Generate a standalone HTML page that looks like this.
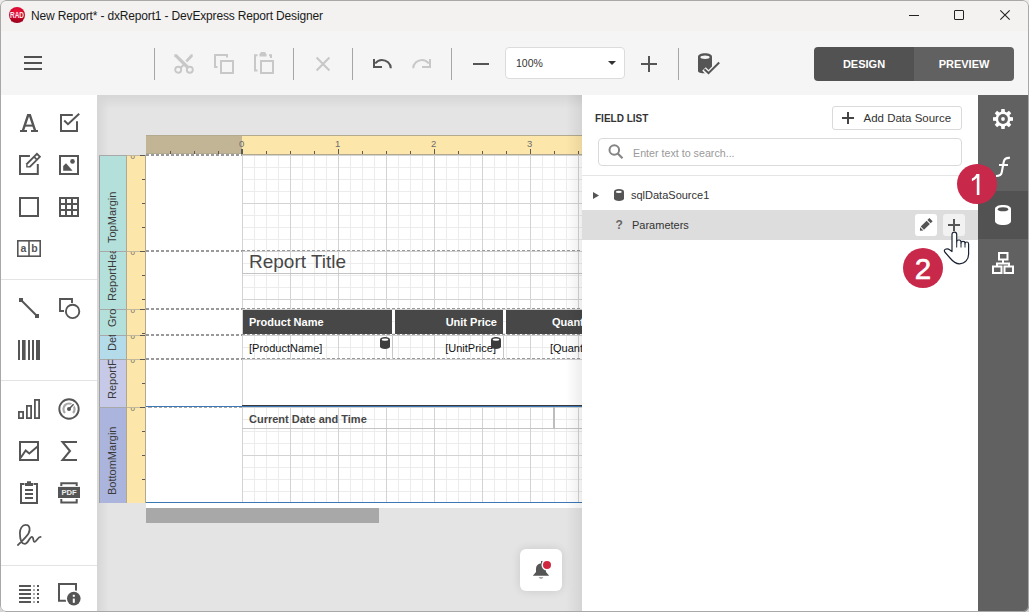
<!DOCTYPE html>
<html><head><meta charset="utf-8">
<style>
*{box-sizing:border-box}
html,body{margin:0;padding:0;width:1029px;height:612px;overflow:hidden;background:linear-gradient(#ecebea,#d6d4d3);font-family:"Liberation Sans",sans-serif}
.a{position:absolute}
.t{position:absolute;white-space:nowrap;line-height:1}
svg{position:absolute;overflow:visible}
</style></head><body>
<div id="root" class="a" style="left:0;top:0;width:1029px;height:612px;overflow:hidden;border-radius:6px">

<!-- title bar -->
<div class="a" style="left:0;top:0;width:1029px;height:31px;background:#f3f2f1"></div>
<!-- RAD logo -->
<svg style="left:9px;top:7px" width="16" height="16" viewBox="0 0 16 16"><defs><radialGradient id="rg" cx="50%" cy="35%" r="65%"><stop offset="0" stop-color="#f01840"/><stop offset="0.7" stop-color="#d0062a"/><stop offset="1" stop-color="#90001a"/></radialGradient></defs><circle cx="8" cy="8" r="8" fill="url(#rg)"/><rect x="2" y="11.5" width="12" height="3" fill="#a0001c" opacity="0.6"/><text x="8" y="11.3" text-anchor="middle" textLength="14" lengthAdjust="spacingAndGlyphs" style="font-family:'Liberation Sans';font-weight:bold" font-size="8.2" fill="#f4e8ec">RAD</text></svg>
<div class="t" style="left:31px;top:10px;font-size:12px;color:#1a1a1a;letter-spacing:-0.16px">New Report* - dxReport1 - DevExpress Report Designer</div>
<!-- window controls -->
<div class="a" style="left:909px;top:15px;width:10px;height:1px;background:#222"></div>
<div class="a" style="left:954px;top:10px;width:10px;height:10px;border:1px solid #222;border-radius:1px"></div>
<svg style="left:1000px;top:10px" width="10" height="10"><path d="M0.3 0.3L9.7 9.7M9.7 0.3L0.3 9.7" stroke="#222" stroke-width="1.1"/></svg>

<!-- toolbar -->
<div class="a" style="left:0;top:31px;width:1029px;height:64px;background:#f5f5f5"></div>
<!-- hamburger -->
<div class="a" style="left:24px;top:56px;width:18px;height:2px;background:#505050"></div>
<div class="a" style="left:24px;top:62px;width:18px;height:2px;background:#505050"></div>
<div class="a" style="left:24px;top:68px;width:18px;height:2px;background:#505050"></div>
<!-- separators -->
<div class="a" style="left:154px;top:48px;width:1px;height:32px;background:#a6a6a6"></div>
<div class="a" style="left:293px;top:48px;width:1px;height:32px;background:#a6a6a6"></div>
<div class="a" style="left:352px;top:48px;width:1px;height:32px;background:#a6a6a6"></div>
<div class="a" style="left:451px;top:48px;width:1px;height:32px;background:#a6a6a6"></div>
<div class="a" style="left:678px;top:48px;width:1px;height:32px;background:#a6a6a6"></div>
<!-- cut -->
<svg style="left:174px;top:54px" width="20" height="20" viewBox="0 0 20 20"><g fill="#c8c8c8"><path d="M0.3 0.3H2.8L15.5 12.8L13.2 15.2L0.3 2.2Z"/><path d="M18.7 0.3V2.8L13.3 8.2L11.4 6.4L17 0.3Z"/><path d="M10.6 8.6L12.1 10L7 14.8L5.5 13.5Z"/></g><g fill="none" stroke="#c8c8c8" stroke-width="1.9"><circle cx="4.2" cy="15.8" r="3"/><circle cx="15.8" cy="15.8" r="3"/></g></svg>
<!-- copy -->
<svg style="left:214px;top:54px" width="21" height="21" viewBox="0 0 21 21"><g fill="none" stroke="#c8c8c8" stroke-width="2"><path d="M3.5 13H1V1H13V3.5"/><rect x="7" y="7" width="12" height="12"/></g></svg>
<!-- paste -->
<svg style="left:254px;top:52px" width="21" height="23" viewBox="0 0 21 23"><g fill="none" stroke="#c8c8c8" stroke-width="2"><path d="M3.5 3.3H1V18.5H3.5"/><path d="M15 3.3H17V6"/><rect x="7" y="9" width="12" height="12"/></g><path d="M5.5 2.3L7 0H11L12.5 2.3V4.6H5.5Z" fill="#c8c8c8"/></svg>
<!-- delete -->
<svg style="left:316px;top:57px" width="14" height="14" viewBox="0 0 14 14"><path d="M0.6 0.6L13.4 13.4M13.4 0.6L0.6 13.4" stroke="#c8c8c8" stroke-width="2.1"/></svg>
<!-- undo -->
<svg style="left:372px;top:59px" width="20" height="10" viewBox="0 0 20 10"><path d="M18.8 9.3C18.8 4.5 14.5 1 9.8 1C7 1 5 2.2 3.2 4.5" fill="none" stroke="#555" stroke-width="2"/><path d="M1 0H3V7H10V9H1Z" fill="#555"/></svg>
<!-- redo -->
<svg style="left:412px;top:59px" width="20" height="10" viewBox="0 0 20 10"><path d="M1.2 9.3C1.2 4.5 5.5 1 10.2 1C13 1 15 2.2 16.8 4.5" fill="none" stroke="#c8c8c8" stroke-width="2"/><path d="M19 0H17V7H10V9H19Z" fill="#c8c8c8"/></svg>
<!-- minus -->
<div class="a" style="left:473px;top:63px;width:16px;height:2px;background:#555"></div>
<!-- zoom combo -->
<div class="a" style="left:505px;top:47px;width:120px;height:32px;background:#fff;border:1px solid #dcdcdc;border-radius:4px"></div>
<div class="t" style="left:516px;top:58px;font-size:10.5px;color:#333">100%</div>
<svg style="left:608px;top:61px" width="8" height="4"><path d="M0 0H8L4 4Z" fill="#333"/></svg>
<!-- plus -->
<div class="a" style="left:641px;top:63px;width:16px;height:2px;background:#555"></div>
<div class="a" style="left:648px;top:56px;width:2px;height:16px;background:#555"></div>
<!-- validate -->
<svg style="left:697px;top:53px" width="24" height="23" viewBox="0 0 24 23"><path d="M1 4C1 1.5 4 0.3 8 0.3C12 0.3 15 1.5 15 4V18C15 19.5 12 20.3 8 20.3C4 20.3 1 19.5 1 18Z" fill="#555"/><ellipse cx="8" cy="4.3" rx="4.6" ry="1.7" fill="#f5f5f5"/><path d="M7 16L11.5 20.5L22.5 9.5" fill="none" stroke="#f5f5f5" stroke-width="5"/><path d="M7.5 16.2L11.5 20.2L22.2 9.5" fill="none" stroke="#555" stroke-width="2"/></svg>
<!-- design/preview -->
<div class="a" style="left:814px;top:47px;width:100px;height:34px;background:#525252;border-radius:4px 0 0 4px"></div>
<div class="a" style="left:914px;top:47px;width:100px;height:34px;background:#616161;border-radius:0 4px 4px 0"></div>
<div class="t" style="left:814px;top:59px;width:100px;text-align:center;font-size:11px;font-weight:bold;color:#fff">DESIGN</div>
<div class="t" style="left:914px;top:59px;width:100px;text-align:center;font-size:11px;font-weight:bold;color:#fff">PREVIEW</div>
<!-- left toolbox -->
<div class="a" style="left:0;top:95px;width:97px;height:517px;background:#fff"></div>
<div class="a" style="left:1px;top:279px;width:96px;height:1px;background:#e3e3e3"></div>
<div class="a" style="left:1px;top:380px;width:96px;height:1px;background:#e3e3e3"></div>
<div class="a" style="left:1px;top:565px;width:96px;height:1px;background:#e3e3e3"></div>
<!-- A -->
<svg style="left:20px;top:114px" width="18" height="18" viewBox="0 0 18 18"><g fill="#555"><path d="M7.2 0H10.8L16.3 16.5H13.8L9 2.6L4.2 16.5H1.7Z"/><rect x="5" y="10.6" width="8" height="2"/><rect x="0" y="16" width="7" height="2"/><rect x="11" y="16" width="7" height="2"/></g></svg>
<!-- checkbox -->
<svg style="left:60px;top:113px" width="20" height="19" viewBox="0 0 20 19"><g fill="none" stroke="#555" stroke-width="2"><path d="M12.8 2H1V18H17V8.2"/><path d="M4.2 7.5L8 11.2L19.2 0.8"/></g></svg>
<!-- edit (richtext) -->
<svg style="left:19px;top:153px" width="23" height="23" viewBox="0 0 23 23"><path d="M10.9 3H1V21H18.8V11" fill="none" stroke="#555" stroke-width="2"/><g transform="translate(7.2 14.6) rotate(-45)"><path d="M0 0L3 -3H18.2V3H3Z" fill="#555"/><path d="M1.9 0L3.3 -1.2H12.3V1.2H3.3Z" fill="#fff"/><rect x="14" y="-1.2" width="2.4" height="2.4" fill="#fff"/></g></svg>
<!-- picture -->
<svg style="left:59px;top:155px" width="20" height="20" viewBox="0 0 20 20"><rect x="1" y="1" width="18" height="18" fill="none" stroke="#555" stroke-width="2"/><circle cx="13.5" cy="6.4" r="2.3" fill="#555"/><path d="M4.2 15.8V11L7 8.3L13.6 15.8Z" fill="#555"/></svg>
<!-- rect -->
<svg style="left:19px;top:197px" width="20" height="20" viewBox="0 0 20 20"><rect x="1" y="1" width="18" height="18" fill="none" stroke="#555" stroke-width="2"/></svg>
<!-- table -->
<svg style="left:59px;top:197px" width="20" height="20" viewBox="0 0 20 20"><g fill="none" stroke="#555" stroke-width="2"><rect x="1" y="1" width="18" height="18"/><path d="M7 1V19M13 1V19M1 7H19M1 13H19"/></g></svg>
<!-- ab -->
<svg style="left:17px;top:240px" width="24" height="17" viewBox="0 0 24 17"><g fill="none" stroke="#555" stroke-width="1.6"><rect x="0.8" y="0.8" width="22.4" height="15.4"/><path d="M12 0.8V16.2"/></g><text x="6.4" y="11.8" style="font-family:'Liberation Sans';font-weight:bold" font-size="10.5" fill="#555" text-anchor="middle">a</text><text x="17.4" y="11.8" style="font-family:'Liberation Sans';font-weight:bold" font-size="10.5" fill="#555" text-anchor="middle">b</text></svg>
<!-- line -->
<svg style="left:19px;top:298px" width="20" height="20" viewBox="0 0 20 20"><path d="M2 2L18 18" stroke="#555" stroke-width="1.9"/><rect x="0" y="0" width="4" height="4" fill="#555"/><rect x="16" y="16" width="4" height="4" fill="#555"/></svg>
<!-- shapes -->
<svg style="left:59px;top:298px" width="22" height="22" viewBox="0 0 22 22"><g fill="none" stroke="#555" stroke-width="1.9"><path d="M5 13H1V1H13V5"/><circle cx="13.6" cy="13.4" r="6.7"/></g></svg>
<!-- barcode -->
<svg style="left:18px;top:340px" width="22" height="20" viewBox="0 0 22 20"><g fill="#555"><rect x="0" y="0" width="2" height="20"/><rect x="4" y="0" width="3.6" height="20"/><rect x="10" y="0" width="2" height="20"/><rect x="14" y="0" width="2" height="20"/><rect x="18" y="0" width="4" height="20"/></g></svg>
<!-- chart -->
<svg style="left:18px;top:399px" width="22" height="20" viewBox="0 0 22 20"><g fill="none" stroke="#555" stroke-width="1.8"><rect x="0.9" y="12.9" width="4.2" height="6.2"/><rect x="8.9" y="6.9" width="4.2" height="12.2"/><rect x="16.9" y="0.9" width="4.2" height="18.2"/></g></svg>
<!-- gauge -->
<svg style="left:58px;top:398px" width="22" height="22" viewBox="0 0 22 22"><circle cx="11" cy="11" r="9.7" fill="none" stroke="#555" stroke-width="1.9"/><path d="M7 15A5.6 5.6 0 1 1 15 15" fill="none" stroke="#aaa" stroke-width="2.2"/><path d="M11 11L15.8 6" stroke="#fff" stroke-width="3.4"/><path d="M11 11L15.6 6.2" stroke="#555" stroke-width="1.5"/><circle cx="11" cy="11" r="2" fill="#555"/></svg>
<!-- sparkline -->
<svg style="left:19px;top:441px" width="20" height="20" viewBox="0 0 20 20"><g fill="none" stroke="#555" stroke-width="2"><rect x="1" y="1" width="18" height="18"/><path d="M1.5 17L6.7 9.5L10.3 12.5L18.8 5.3"/></g></svg>
<!-- sigma -->
<svg style="left:61px;top:441px" width="17" height="20" viewBox="0 0 17 20"><path d="M16 1H1.5L9 10L1.5 19H16" fill="none" stroke="#555" stroke-width="2"/></svg>
<!-- clipboard -->
<svg style="left:20px;top:481px" width="18" height="23" viewBox="0 0 18 23"><g fill="none" stroke="#555" stroke-width="2"><path d="M4.5 3H1V22H17V3H13.5"/></g><path d="M5 2H7V0.2H11V2H13V5H5Z" fill="#555"/><g fill="#555"><rect x="5" y="8" width="8" height="2"/><rect x="5" y="12" width="8" height="2"/><rect x="5" y="16" width="8" height="2"/></g></svg>
<!-- pdf -->
<svg style="left:58px;top:482px" width="22" height="22" viewBox="0 0 22 22"><g fill="none" stroke="#555" stroke-width="2"><path d="M3.3 3.9V1.3H18.7V3.9M3.3 17V20.5H18.7V17"/></g><rect x="0" y="4.9" width="22" height="11.1" fill="#555"/><text x="11" y="13.1" style="font-family:'Liberation Sans';font-weight:bold" font-size="7.6" fill="#eee" text-anchor="middle">PDF</text></svg>
<!-- signature -->
<svg style="left:17px;top:524px" width="25" height="23" viewBox="0 0 25 23"><path d="M0.9 21C3 19 9 13.5 11.5 9.5C13.5 6 13 1 9 0.9C5 0.7 2.9 5 2.9 9C2.9 14 4 19.9 7.8 19.9C11 19.9 12.5 12.9 14.8 12.9C17 12.9 15.8 17.9 17.3 17.9C19.2 17.9 21 12.9 23.6 12.9" fill="none" stroke="#555" stroke-width="1.8" stroke-linecap="round"/></svg>
<!-- toc -->
<svg style="left:19px;top:585px" width="20" height="18" viewBox="0 0 20 18"><g fill="#555"><rect x="0" y="0" width="12" height="2"/><rect x="0" y="4" width="12" height="2"/><rect x="0" y="8" width="12" height="2"/><rect x="0" y="12" width="12" height="2"/><rect x="0" y="16" width="12" height="2"/><rect x="18" y="0" width="2" height="2"/><rect x="18" y="4" width="2" height="2"/><rect x="18" y="8" width="2" height="2"/><rect x="18" y="12" width="2" height="2"/><rect x="18" y="16" width="2" height="2"/></g><g fill="#aaa"><rect x="14" y="0" width="2" height="2"/><rect x="14" y="4" width="2" height="2"/><rect x="14" y="8" width="2" height="2"/><rect x="14" y="12" width="2" height="2"/><rect x="14" y="16" width="2" height="2"/></g></svg>
<!-- page info -->
<svg style="left:58px;top:583px" width="23" height="23" viewBox="0 0 23 23"><path d="M8 17.8H1V1H18V8" fill="none" stroke="#555" stroke-width="2"/><circle cx="15.8" cy="15.6" r="8.3" fill="#fff"/><circle cx="15.8" cy="15.6" r="6.8" fill="#555"/><rect x="14.8" y="15.6" width="2" height="4.2" fill="#fff"/><rect x="14.8" y="11.8" width="2" height="2" fill="#fff"/></svg>
<div class="a" style="left:97px;top:95px;width:485px;height:517px;background:#e4e4e4;overflow:hidden">
<div class="a" style="left:0;top:0;width:485px;height:14px;background:linear-gradient(#d6d6d6,rgba(228,228,228,0))"></div>
<div class="a" style="left:0;top:0;width:12px;height:517px;background:linear-gradient(to right,#d6d6d6,rgba(228,228,228,0))"></div>
</div>
<div class="a" style="left:97px;top:95px;width:485px;height:517px;overflow:hidden">
<div class="a" style="left:49px;top:40px;width:96px;height:20px;background:#c1b595"></div>
<div class="a" style="left:145px;top:40px;width:400px;height:20px;background:#fde6a9"></div>
<div class="a" style="left:49px;top:40px;width:500px;height:1px;background:#b3a98f"></div>
<div class="a" style="left:49px;top:58px;width:96px;height:1px;background:#b3a98f"></div>
<div class="a" style="left:49px;top:59px;width:96px;height:1px;background:#fff"></div>
<div class="a" style="left:145px;top:59px;width:400px;height:1px;background:#b3a98f"></div>
<div class="a" style="left:73px;top:56px;width:1px;height:3px;background:#5a5a5a"></div>
<div class="a" style="left:97px;top:56px;width:1px;height:3px;background:#5a5a5a"></div>
<div class="a" style="left:121px;top:56px;width:1px;height:3px;background:#5a5a5a"></div>
<div class="a" style="left:144px;top:54px;width:2px;height:5px;background:#5a5a5a"></div>
<div class="a" style="left:169px;top:56px;width:1px;height:3px;background:#5a5a5a"></div>
<div class="a" style="left:193px;top:56px;width:1px;height:3px;background:#5a5a5a"></div>
<div class="a" style="left:217px;top:56px;width:1px;height:3px;background:#5a5a5a"></div>
<div class="a" style="left:241px;top:54px;width:1px;height:5px;background:#5a5a5a"></div>
<div class="a" style="left:265px;top:56px;width:1px;height:3px;background:#5a5a5a"></div>
<div class="a" style="left:289px;top:56px;width:1px;height:3px;background:#5a5a5a"></div>
<div class="a" style="left:313px;top:56px;width:1px;height:3px;background:#5a5a5a"></div>
<div class="a" style="left:337px;top:54px;width:1px;height:5px;background:#5a5a5a"></div>
<div class="a" style="left:361px;top:56px;width:1px;height:3px;background:#5a5a5a"></div>
<div class="a" style="left:385px;top:56px;width:1px;height:3px;background:#5a5a5a"></div>
<div class="a" style="left:409px;top:56px;width:1px;height:3px;background:#5a5a5a"></div>
<div class="a" style="left:433px;top:54px;width:1px;height:5px;background:#5a5a5a"></div>
<div class="a" style="left:457px;top:56px;width:1px;height:3px;background:#5a5a5a"></div>
<div class="a" style="left:481px;top:56px;width:1px;height:3px;background:#5a5a5a"></div>
<div class="a" style="left:505px;top:56px;width:1px;height:3px;background:#5a5a5a"></div>
<div class="a" style="left:529px;top:54px;width:1px;height:5px;background:#5a5a5a"></div>
<div class="t" style="left:142px;top:43.5px;font-size:9.5px;color:#6e6e6e">0</div>
<div class="t" style="left:238px;top:43.5px;font-size:9.5px;color:#6e6e6e">1</div>
<div class="t" style="left:334px;top:43.5px;font-size:9.5px;color:#6e6e6e">2</div>
<div class="t" style="left:430px;top:43.5px;font-size:9.5px;color:#6e6e6e">3</div>
<div class="a" style="left:2px;top:60px;width:47px;height:348px;background:#b0a890"></div>
<div class="a" style="left:2px;top:60px;width:1px;height:348px;background:#a0a0a0"></div>
<div class="a" style="left:3px;top:60px;width:26px;height:96px;background:#b3e0db"></div>
<div class="a" style="left:30px;top:60px;width:18px;height:96px;background:#fde6a9"></div>
<div class="a" style="left:2px;top:60px;width:47px;height:1px;background:#a8a8a8"></div>
<div class="a" style="left:3px;top:60px;width:26px;height:96px;overflow:hidden"><div class="t" style="left:7px;top:88px;font-size:11px;color:#3a3a3a;transform-origin:0 0;transform:rotate(-90deg)">TopMargin</div></div>
<div class="a" style="left:45px;top:84px;width:4px;height:1px;background:#5a5a5a"></div>
<div class="a" style="left:45px;top:108px;width:4px;height:1px;background:#5a5a5a"></div>
<div class="a" style="left:45px;top:132px;width:4px;height:1px;background:#5a5a5a"></div>
<div class="a" style="left:30px;top:60px;width:18px;height:1px;background:#c4b89c"></div>
<div class="a" style="left:43px;top:60px;width:6px;height:1px;background:#5a5a5a"></div>
<div class="a" style="left:32px;top:61px;width:9px;height:6px;overflow:hidden"><div class="t" style="left:1.5px;top:-3.5px;font-size:8px;color:#6a6e70">0</div></div>
<div class="a" style="left:3px;top:156px;width:26px;height:58px;background:#b3e0db"></div>
<div class="a" style="left:30px;top:156px;width:18px;height:58px;background:#fde6a9"></div>
<div class="a" style="left:2px;top:156px;width:47px;height:1px;background:#a8a8a8"></div>
<div class="a" style="left:3px;top:156px;width:26px;height:58px;overflow:hidden"><div class="t" style="left:7px;top:50px;font-size:11px;color:#3a3a3a;transform-origin:0 0;transform:rotate(-90deg)">ReportHeader</div></div>
<div class="a" style="left:45px;top:180px;width:4px;height:1px;background:#5a5a5a"></div>
<div class="a" style="left:45px;top:204px;width:4px;height:1px;background:#5a5a5a"></div>
<div class="a" style="left:30px;top:156px;width:18px;height:1px;background:#c4b89c"></div>
<div class="a" style="left:43px;top:156px;width:6px;height:1px;background:#5a5a5a"></div>
<div class="a" style="left:32px;top:157px;width:9px;height:6px;overflow:hidden"><div class="t" style="left:1.5px;top:-3.5px;font-size:8px;color:#6a6e70">0</div></div>
<div class="a" style="left:3px;top:214px;width:26px;height:26px;background:#b3e0db"></div>
<div class="a" style="left:30px;top:214px;width:18px;height:26px;background:#fde6a9"></div>
<div class="a" style="left:2px;top:214px;width:47px;height:1px;background:#a8a8a8"></div>
<div class="a" style="left:3px;top:214px;width:26px;height:26px;overflow:hidden"><div class="t" style="left:7px;top:18px;font-size:11px;color:#3a3a3a;transform-origin:0 0;transform:rotate(-90deg)">GroupHeader</div></div>
<div class="a" style="left:45px;top:238px;width:4px;height:1px;background:#5a5a5a"></div>
<div class="a" style="left:30px;top:214px;width:18px;height:1px;background:#c4b89c"></div>
<div class="a" style="left:43px;top:214px;width:6px;height:1px;background:#5a5a5a"></div>
<div class="a" style="left:32px;top:215px;width:9px;height:6px;overflow:hidden"><div class="t" style="left:1.5px;top:-3.5px;font-size:8px;color:#6a6e70">0</div></div>
<div class="a" style="left:3px;top:240px;width:26px;height:24px;background:#b4dbea"></div>
<div class="a" style="left:30px;top:240px;width:18px;height:24px;background:#fde6a9"></div>
<div class="a" style="left:2px;top:240px;width:47px;height:1px;background:#a8a8a8"></div>
<div class="a" style="left:3px;top:240px;width:26px;height:24px;overflow:hidden"><div class="t" style="left:7px;top:16px;font-size:11px;color:#3a3a3a;transform-origin:0 0;transform:rotate(-90deg)">Detail</div></div>
<div class="a" style="left:30px;top:240px;width:18px;height:1px;background:#c4b89c"></div>
<div class="a" style="left:43px;top:240px;width:6px;height:1px;background:#5a5a5a"></div>
<div class="a" style="left:32px;top:241px;width:9px;height:6px;overflow:hidden"><div class="t" style="left:1.5px;top:-3.5px;font-size:8px;color:#6a6e70">0</div></div>
<div class="a" style="left:3px;top:264px;width:26px;height:48px;background:#c6cae8"></div>
<div class="a" style="left:30px;top:264px;width:18px;height:48px;background:#fde6a9"></div>
<div class="a" style="left:2px;top:264px;width:47px;height:1px;background:#a8a8a8"></div>
<div class="a" style="left:3px;top:264px;width:26px;height:48px;overflow:hidden"><div class="t" style="left:7px;top:40px;font-size:11px;color:#3a3a3a;transform-origin:0 0;transform:rotate(-90deg)">ReportFooter</div></div>
<div class="a" style="left:45px;top:288px;width:4px;height:1px;background:#5a5a5a"></div>
<div class="a" style="left:30px;top:264px;width:18px;height:1px;background:#c4b89c"></div>
<div class="a" style="left:43px;top:264px;width:6px;height:1px;background:#5a5a5a"></div>
<div class="a" style="left:32px;top:265px;width:9px;height:6px;overflow:hidden"><div class="t" style="left:1.5px;top:-3.5px;font-size:8px;color:#6a6e70">0</div></div>
<div class="a" style="left:3px;top:312px;width:26px;height:96px;background:#aab4dc"></div>
<div class="a" style="left:30px;top:312px;width:18px;height:96px;background:#fde6a9"></div>
<div class="a" style="left:2px;top:312px;width:47px;height:1px;background:#a8a8a8"></div>
<div class="a" style="left:3px;top:312px;width:26px;height:96px;overflow:hidden"><div class="t" style="left:7px;top:88px;font-size:11px;color:#3a3a3a;transform-origin:0 0;transform:rotate(-90deg)">BottomMargin</div></div>
<div class="a" style="left:45px;top:336px;width:4px;height:1px;background:#5a5a5a"></div>
<div class="a" style="left:45px;top:360px;width:4px;height:1px;background:#5a5a5a"></div>
<div class="a" style="left:45px;top:384px;width:4px;height:1px;background:#5a5a5a"></div>
<div class="a" style="left:30px;top:312px;width:18px;height:1px;background:#c4b89c"></div>
<div class="a" style="left:43px;top:312px;width:6px;height:1px;background:#5a5a5a"></div>
<div class="a" style="left:32px;top:313px;width:9px;height:6px;overflow:hidden"><div class="t" style="left:1.5px;top:-3.5px;font-size:8px;color:#6a6e70">0</div></div>
<div class="a" style="left:29px;top:60px;width:1px;height:348px;background:#b0a890"></div>
<div class="a" style="left:48px;top:60px;width:1px;height:348px;background:#b0a890"></div>
<div class="a" style="left:49px;top:60px;width:436px;height:353px;background:#fff"></div>
<div class="a" style="left:145px;top:60px;width:340px;height:96px;background:linear-gradient(to right,#d3d3d3 1px,transparent 1px) 0 0/48px 48px,linear-gradient(to bottom,#d3d3d3 1px,transparent 1px) 0 0/48px 48px,linear-gradient(to right,#ececec 1px,transparent 1px) 0 0/12px 12px,linear-gradient(to bottom,#ececec 1px,transparent 1px) 0 0/12px 12px,#fff"></div>
<div class="a" style="left:145px;top:156px;width:340px;height:58px;background:linear-gradient(to right,#d3d3d3 1px,transparent 1px) 0 0/48px 48px,linear-gradient(to bottom,#d3d3d3 1px,transparent 1px) 0 0/48px 48px,linear-gradient(to right,#ececec 1px,transparent 1px) 0 0/12px 12px,linear-gradient(to bottom,#ececec 1px,transparent 1px) 0 0/12px 12px,#fff"></div>
<div class="a" style="left:145px;top:214px;width:340px;height:26px;background:linear-gradient(to right,#d3d3d3 1px,transparent 1px) 0 0/48px 48px,linear-gradient(to bottom,#d3d3d3 1px,transparent 1px) 0 0/48px 48px,linear-gradient(to right,#ececec 1px,transparent 1px) 0 0/12px 12px,linear-gradient(to bottom,#ececec 1px,transparent 1px) 0 0/12px 12px,#fff"></div>
<div class="a" style="left:145px;top:240px;width:340px;height:24px;background:linear-gradient(to right,#d3d3d3 1px,transparent 1px) 0 0/48px 48px,linear-gradient(to bottom,#d3d3d3 1px,transparent 1px) 0 0/48px 48px,linear-gradient(to right,#ececec 1px,transparent 1px) 0 0/12px 12px,linear-gradient(to bottom,#ececec 1px,transparent 1px) 0 0/12px 12px,#fff"></div>
<div class="a" style="left:145px;top:264px;width:340px;height:48px;background:#fff;border-left:1px solid #d3d3d3"></div>
<div class="a" style="left:145px;top:312px;width:340px;height:96px;background:linear-gradient(to right,#d3d3d3 1px,transparent 1px) 0 0/48px 48px,linear-gradient(to bottom,#d3d3d3 1px,transparent 1px) 0 0/48px 48px,linear-gradient(to right,#ececec 1px,transparent 1px) 0 0/12px 12px,linear-gradient(to bottom,#ececec 1px,transparent 1px) 0 0/12px 12px,#fff"></div>
<div class="a" style="left:49px;top:59px;width:96px;height:2px;background:repeating-linear-gradient(to right,#999 0 3px,transparent 3px 5px)"></div>
<div class="a" style="left:49px;top:155px;width:96px;height:2px;background:repeating-linear-gradient(to right,#999 0 3px,transparent 3px 5px)"></div>
<div class="a" style="left:145px;top:156px;width:340px;height:1px;background:#cfcfcf"></div>
<div class="a" style="left:145px;top:155px;width:340px;height:1px;background:repeating-linear-gradient(to right,#999 0 3px,transparent 3px 5px)"></div>
<div class="a" style="left:49px;top:213px;width:96px;height:2px;background:repeating-linear-gradient(to right,#999 0 3px,transparent 3px 5px)"></div>
<div class="a" style="left:145px;top:214px;width:340px;height:1px;background:#cfcfcf"></div>
<div class="a" style="left:145px;top:213px;width:340px;height:1px;background:repeating-linear-gradient(to right,#999 0 3px,transparent 3px 5px)"></div>
<div class="a" style="left:49px;top:239px;width:96px;height:2px;background:repeating-linear-gradient(to right,#999 0 3px,transparent 3px 5px)"></div>
<div class="a" style="left:145px;top:240px;width:340px;height:1px;background:#cfcfcf"></div>
<div class="a" style="left:145px;top:239px;width:340px;height:1px;background:repeating-linear-gradient(to right,#999 0 3px,transparent 3px 5px)"></div>
<div class="a" style="left:49px;top:263px;width:96px;height:2px;background:repeating-linear-gradient(to right,#999 0 3px,transparent 3px 5px)"></div>
<div class="a" style="left:145px;top:264px;width:340px;height:1px;background:#cfcfcf"></div>
<div class="a" style="left:145px;top:263px;width:340px;height:1px;background:repeating-linear-gradient(to right,#999 0 3px,transparent 3px 5px)"></div>
<div class="a" style="left:49px;top:312px;width:96px;height:1px;background:repeating-linear-gradient(to right,#aaa 0 3px,transparent 3px 5px) 3px 0"></div>
<div class="a" style="left:145px;top:310px;width:340px;height:1px;background:#3a3a3a"></div>
<div class="a" style="left:49px;top:311px;width:436px;height:1px;background:#3b78b5"></div>
<div class="a" style="left:49px;top:407px;width:436px;height:1px;background:#3b78b5"></div>
<div class="a" style="left:145px;top:156px;width:340px;height:23px;border-left:1px solid #c4c4c4;border-bottom:1px solid #c4c4c4"></div>
<div class="t" style="left:152px;top:157px;font-size:19px;color:#474747">Report Title</div>
<div class="a" style="left:146px;top:215px;width:149px;height:24px;background:#474747"></div>
<div class="a" style="left:298px;top:215px;width:108px;height:24px;background:#474747"></div>
<div class="a" style="left:409px;top:215px;width:80px;height:24px;background:#474747"></div>
<div class="t" style="left:152px;top:222px;font-size:11px;font-weight:bold;color:#fff">Product Name</div>
<div class="t" style="left:299px;top:222px;font-size:11px;font-weight:bold;color:#fff;width:101px;text-align:right">Unit Price</div>
<div class="t" style="left:455px;top:222px;font-size:11px;font-weight:bold;color:#fff">Quantity</div>
<div class="a" style="left:295px;top:241px;width:1px;height:23px;background:#c8c8c8"></div>
<div class="a" style="left:406px;top:241px;width:1px;height:23px;background:#c8c8c8"></div>
<div class="t" style="left:152px;top:248px;font-size:11px;color:#111">[ProductName]</div>
<div class="t" style="left:299px;top:248px;font-size:11px;color:#111;width:100px;text-align:right">[UnitPrice]</div>
<div class="t" style="left:453px;top:248px;font-size:11px;color:#111">[Quantity]</div>
<svg style="left:283px;top:242px" width="10" height="12" viewBox="0 0 10 12"><path d="M0 2.5C0 1 2.2 0 5 0C7.8 0 10 1 10 2.5V9.5C10 11 7.8 12 5 12C2.2 12 0 11 0 9.5Z" fill="#3c3c3c"/><ellipse cx="5" cy="2.6" rx="3.3" ry="1.2" fill="#fff"/></svg>
<svg style="left:394px;top:242px" width="10" height="12" viewBox="0 0 10 12"><path d="M0 2.5C0 1 2.2 0 5 0C7.8 0 10 1 10 2.5V9.5C10 11 7.8 12 5 12C2.2 12 0 11 0 9.5Z" fill="#3c3c3c"/><ellipse cx="5" cy="2.6" rx="3.3" ry="1.2" fill="#fff"/></svg>
<div class="a" style="left:145px;top:312px;width:312px;height:22px;border-bottom:1px solid #c4c4c4"></div>
<div class="a" style="left:456px;top:312px;width:2px;height:22px;background:#bdbdbd"></div>
<div class="a" style="left:458px;top:333px;width:30px;height:1px;background:#c4c4c4"></div>
<div class="t" style="left:152px;top:319px;font-size:11px;font-weight:bold;color:#474747">Current Date and Time</div>
<div class="a" style="left:49px;top:413px;width:233px;height:15px;background:#a8a8a8"></div>
<div class="a" style="left:469px;top:0px;width:16px;height:517px;background:linear-gradient(to right,rgba(0,0,0,0),rgba(0,0,0,0.07))"></div>
<div class="a" style="left:423px;top:454px;width:42px;height:42px;background:#fff;border-radius:6px;box-shadow:0 0 10px rgba(0,0,0,0.12)"></div>
<svg style="left:435px;top:465px" width="20" height="20" viewBox="0 0 20 20"><path d="M9 1H10.6V3.4C13 4.2 14 6.5 14 9V12L17.2 15.8H0.8L4 12V8.8C4 6 5.5 4 9 3.3Z" fill="#555"/><path d="M6.5 17.4H11.5Q9 19.6 6.5 17.4Z" fill="#555"/><circle cx="15" cy="5" r="5.5" fill="#fff"/><circle cx="15" cy="5" r="4" fill="#d0283f"/></svg>
</div>
<!-- field list -->
<div class="a" style="left:582px;top:95px;width:396px;height:517px;background:#fff"></div>
<div class="t" style="left:595px;top:114px;font-size:10px;font-weight:bold;color:#333">FIELD LIST</div>
<div class="a" style="left:832px;top:106px;width:130px;height:24px;border:1px solid #dadada;border-radius:3px;background:#fff"></div>
<div class="a" style="left:842px;top:117px;width:12px;height:2px;background:#444"></div>
<div class="a" style="left:847px;top:112px;width:2px;height:12px;background:#444"></div>
<div class="t" style="left:863.5px;top:113px;font-size:11.5px;color:#333">Add Data Source</div>
<div class="a" style="left:598px;top:138px;width:364px;height:28px;border:1px solid #dadada;border-radius:4px;background:#fff"></div>
<svg style="left:608px;top:144px" width="16" height="15" viewBox="0 0 16 15"><circle cx="6.3" cy="6" r="4.8" fill="none" stroke="#858585" stroke-width="2"/><path d="M9.7 9.5L14.5 14.3" stroke="#858585" stroke-width="2.2"/></svg>
<div class="t" style="left:633px;top:148px;font-size:10.7px;color:#9a9a9a">Enter text to search...</div>
<div class="a" style="left:582px;top:175px;width:396px;height:1px;background:#e5e5e5"></div>
<svg style="left:593px;top:192px" width="6" height="7" viewBox="0 0 6 7"><path d="M0 0L6 3.5L0 7Z" fill="#555"/></svg>
<svg style="left:614px;top:189px" width="10" height="12" viewBox="0 0 10 12"><path d="M0 2.5C0 1 2.2 0 5 0C7.8 0 10 1 10 2.5V9.5C10 11 7.8 12 5 12C2.2 12 0 11 0 9.5Z" fill="#555"/><ellipse cx="4.8" cy="2.9" rx="3" ry="1.1" fill="#fff"/></svg>
<div class="t" style="left:631px;top:190px;font-size:11px;color:#333">sqlDataSource1</div>
<div class="a" style="left:582px;top:210px;width:396px;height:30px;background:#dddddd"></div>
<div class="t" style="left:615.5px;top:219px;font-size:12px;font-weight:bold;color:#666">?</div>
<div class="t" style="left:632px;top:220px;font-size:11px;color:#333">Parameters</div>
<div class="a" style="left:915px;top:214px;width:22px;height:22px;background:#fff;border-radius:3px"></div>
<svg style="left:919px;top:218px" width="14" height="14" viewBox="0 0 14 14"><g transform="translate(0.9 12.7) rotate(-45)" fill="#555"><path d="M0 0L2.6 -2.3V2.3Z"/><rect x="3.5" y="-2.3" width="8.3" height="4.6"/><rect x="12.9" y="-2.3" width="2.8" height="4.6"/></g></svg>
<div class="a" style="left:943px;top:214px;width:22px;height:22px;background:#f2f2f2;border-radius:3px"></div>
<div class="a" style="left:948px;top:224px;width:12px;height:2px;background:#555"></div>
<div class="a" style="left:953px;top:219px;width:2px;height:12px;background:#555"></div>

<!-- tab bar -->
<div class="a" style="left:978px;top:95px;width:51px;height:517px;background:#616161"></div>
<div class="a" style="left:978px;top:191px;width:51px;height:48px;background:#525252"></div>
<!-- gear -->
<svg style="left:993px;top:109px" width="20" height="20" viewBox="0 0 20 20"><g fill="#fff"><path d="M8.3 0H11.7L12 4H8Z"/><path d="M8.3 0H11.7L12 4H8Z" transform="rotate(45 10 10)"/><path d="M8.3 0H11.7L12 4H8Z" transform="rotate(90 10 10)"/><path d="M8.3 0H11.7L12 4H8Z" transform="rotate(135 10 10)"/><path d="M8.3 0H11.7L12 4H8Z" transform="rotate(180 10 10)"/><path d="M8.3 0H11.7L12 4H8Z" transform="rotate(225 10 10)"/><path d="M8.3 0H11.7L12 4H8Z" transform="rotate(270 10 10)"/><path d="M8.3 0H11.7L12 4H8Z" transform="rotate(315 10 10)"/><circle cx="10" cy="10" r="7.4"/></g><circle cx="10" cy="10" r="4.9" fill="#616161"/><circle cx="10" cy="10" r="1.9" fill="#fff"/></svg>
<!-- f -->
<svg style="left:995px;top:156px" width="17" height="22" viewBox="0 0 17 22"><path d="M14.9 1.9C11 1.5 9.3 2.8 8.7 6L6.7 16.5C6.2 19 4.6 20 1 20" fill="none" stroke="#fff" stroke-width="2.1"/><rect x="4" y="8" width="9" height="2" fill="#fff"/></svg>
<!-- db -->
<svg style="left:995px;top:205px" width="16" height="20" viewBox="0 0 16 20"><path d="M0 4C0 1.5 3.5 0 8 0C12.5 0 16 1.5 16 4V16C16 18.5 12.5 20 8 20C3.5 20 0 18.5 0 16Z" fill="#fff"/><ellipse cx="8" cy="4.2" rx="5.2" ry="2" fill="#525252"/></svg>
<!-- tree -->
<svg style="left:992px;top:252px" width="22" height="22" viewBox="0 0 22 22"><g fill="none" stroke="#fff" stroke-width="2"><rect x="7" y="1" width="8.5" height="6.5"/><rect x="1" y="14.5" width="8.5" height="6.5"/><rect x="12.5" y="14.5" width="8.5" height="6.5"/><path d="M11 7.5V11.5M5 14.5V11.5H17V14.5"/></g></svg>

<!-- badges -->
<div class="a" style="left:957px;top:164px;width:40px;height:40px;border-radius:50%;background:#c8284a"></div>
<svg style="left:957px;top:164px" width="40" height="40" viewBox="0 0 40 40"><path d="M19.4 10H22.4V31H19.8V13.8C18.6 15.2 16.8 16.4 14.9 17.2V14.6C16.9 13.6 18.4 12 19.4 10Z" fill="#fff"/></svg>
<div class="a" style="left:903px;top:248px;width:40px;height:40px;border-radius:50%;background:#c8284a"></div>
<div class="t" style="left:903px;top:254px;width:40px;text-align:center;font-size:29.5px;color:#fff;-webkit-text-stroke:0.6px #fff">2</div>
<!-- hand cursor -->
<svg style="left:942px;top:230px" width="30" height="36" viewBox="0 0 30 36"><path d="M10 21.5V4.5C10 3 11 2.2 12.4 2.2C13.8 2.2 14.7 3 14.7 4.5V12C14.7 10.5 15.5 10 16.8 10C18.2 10 19 10.8 19 12V13C19 11.8 19.8 11.4 21 11.4C22.2 11.4 23 12 23 13.2V13.8C23 12.6 23.8 12 25 12C26.2 12 26.6 12.8 26.6 14V24C26.6 29.5 23 33.8 17.5 33.8C13 33.8 10.5 31 8 28L2.8 22C2.1 21 2.3 19.8 3.3 19.3C4.8 18.5 6.5 18.8 8 20Z" fill="#fff" stroke="#1a2233" stroke-width="1.2" stroke-linejoin="round"/><path d="M14.7 12V17.5M19 13V17.5M23 13.8V17.5" stroke="#1a2233" stroke-width="1"/></svg>
<div class="a" style="left:0;top:0;width:1029px;height:612px;border:1px solid #a8a8a8;border-radius:6px;pointer-events:none"></div>
</div>
</body></html>
